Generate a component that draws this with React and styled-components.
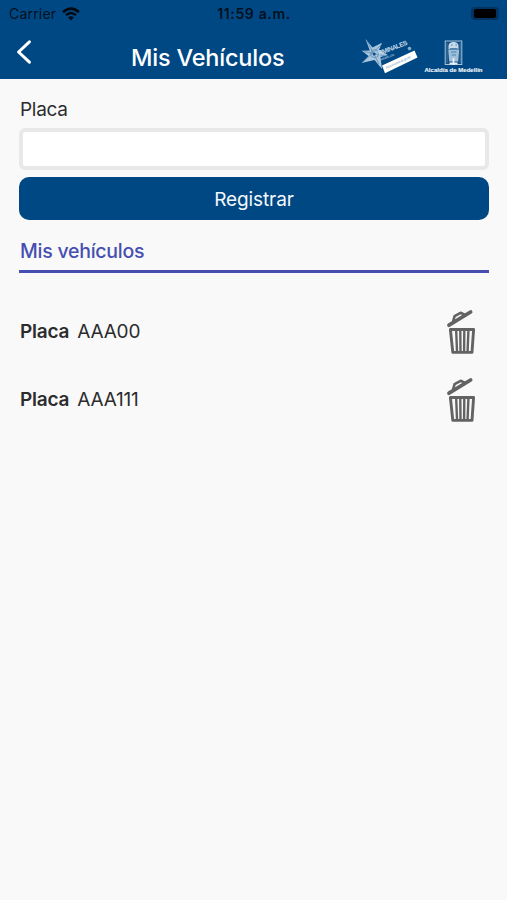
import React, { useState } from 'react';
import styled, { createGlobalStyle } from 'styled-components';

// base styles for the page
const GlobalStyle = createGlobalStyle`
  * {
    box-sizing: border-box;
  }
  body {
    margin: 0;
    background-color: #f9f9f9;
    color: #2c2c2e;
    font-family: Inter, "Liberation Sans", sans-serif;
  }
`;

const Screen = styled.div`
  min-height: 900px;
  background-color: #f9f9f9;
`;

// styles for the header
const Header = styled.header`
  height: 79px;
  background-color: #004884;
`;

const StatusBar = styled.div`
  display: grid;
  grid-template-columns: 1fr auto 1fr;
  align-items: center;
  height: 27px;
  padding: 0 8px 0 9px;
  color: #041020;
  font-size: 14px;
`;

const Carrier = styled.div`
  display: flex;
  align-items: center;
  gap: 6px;
  letter-spacing: 0.2px;
`;

const Clock = styled.div`
  font-weight: 600;
  letter-spacing: 0.65px;
`;

const Battery = styled.div`
  justify-self: end;
  width: 28px;
  height: 13px;
  padding: 2px 3px;
  border-radius: 4px;
  background-color: #023361;
`;

const BatteryLevel = styled.div`
  height: 9px;
  border-radius: 2px;
  background-color: #000;
`;

const NavBar = styled.div`
  display: grid;
  grid-template-columns: 131px 1fr 147px;
  height: 52px;
`;

const BackButton = styled.button`
  display: flex;
  align-items: flex-start;
  padding: 13px 0 0 16px;
  border: none;
  background: none;
`;

const Title = styled.h1`
  margin: 0;
  padding-top: 16px;
  color: #fff;
  font-size: 23.5px;
  font-weight: 500;
  line-height: 30px;
  letter-spacing: -0.2px;
  white-space: nowrap;
`;

const Logos = styled.div`
  display: flex;
  align-items: flex-start;
  gap: 5px;
  padding: 11px 0 0 1px;
`;

// styles for the content
const Content = styled.main`
  padding: 18px 18px 0 19px;
`;

const Label = styled.label`
  display: block;
  padding-left: 1px;
  font-size: 19px;
  line-height: 26px;
  letter-spacing: -0.3px;
`;

const Input = styled.input`
  display: block;
  width: 100%;
  height: 42px;
  margin-top: 5px;
  padding: 0 10px;
  border: 4px solid #e8e8e8;
  border-radius: 6px;
  outline: none;
  background-color: #fff;
  font: inherit;
  font-size: 19px;
`;

const Button = styled.button`
  display: block;
  width: 100%;
  height: 43px;
  margin-top: 7px;
  padding: 2px 0 0;
  border: none;
  border-radius: 10px;
  background-color: #004884;
  color: #f4f8fb;
  font-family: inherit;
  font-size: 19px;
  letter-spacing: -0.1px;
`;

const SectionTitle = styled.h2`
  height: 53px;
  margin: 0;
  padding: 17px 0 0 1px;
  border-bottom: 3px solid #464fb0;
  color: #464fb0;
  font-size: 19.5px;
  font-weight: 500;
  line-height: 28px;
  letter-spacing: -0.25px;
`;

const List = styled.ul`
  margin: 0;
  padding: 25px 0 0;
  list-style: none;
`;

const Row = styled.li`
  display: flex;
  align-items: center;
  justify-content: space-between;
  height: 68px;
  padding: 0 13px 0 1px;
  font-size: 19px;
`;

const Plate = styled.span`
  display: flex;
  gap: 8px;
  padding-bottom: 2px;
  letter-spacing: -0.2px;
`;

const Strong = styled.strong`
  font-weight: 600;
`;

const DeleteButton = styled.button`
  height: 46px;
  padding: 0;
  border: none;
  background: none;
`;

const WifiIcon = () => (
  <svg width="18" height="14" viewBox="0 0 18 14" fill="none" stroke="#02080f">
    <path d="M1 5.2Q9 -2 17 5.2" strokeWidth="2.5" />
    <path d="M4 8.2Q9 3.8 14 8.2" strokeWidth="2.3" />
    <path d="M6.2 10.4Q9 8 11.8 10.4L9 13.4Z" fill="#02080f" stroke="none" />
  </svg>
);

const BackIcon = () => (
  <svg width="16" height="24" viewBox="0 0 16 24" fill="none">
    <path d="M13.4 1.8L2.6 12L13.4 22.2" stroke="#fff" strokeWidth="3" strokeLinecap="round" strokeLinejoin="round" />
  </svg>
);

const TrashIcon = () => (
  <svg width="30" height="46" viewBox="0 0 30 46" fill="none" stroke="#636363" strokeLinecap="round" strokeLinejoin="round">
    <path d="M3 16.2L24.6 3" strokeWidth="3.8" />
    <path d="M7.2 12L8.6 7.2L14.6 3.8L18.6 5.6" strokeWidth="2.6" />
    <path d="M4.4 20.5H27.6L26 43.4H6.8Z" strokeWidth="2.9" />
    <path d="M10.2 22L11 42M14.3 22L14.5 42M18.3 22L18.1 42M22.4 22L21.6 42" strokeWidth="2.4" />
  </svg>
);

const TerminalesLogo = () => (
  <svg width="58" height="37" viewBox="0 0 58 37">
    <path
      d="M4.5 1L11.5 9.5L21 4.8L18 12L27 17L19.5 19L21 31L13.5 22L0.5 25L7.5 18L0.8 12.8L8.8 12.4Z"
      fill="#a9c6dd"
    />
    <g stroke="#4f83ac" strokeWidth="0.7" fill="none">
      <path d="M6 3L18 26M2 24L21 6M3 13.5L25 18" />
      <circle cx="13.7" cy="15.7" r="4" />
    </g>
    <circle cx="13.2" cy="15.9" r="1.5" fill="#0b5089" />
    <g fontFamily="Liberation Sans, sans-serif" fontWeight="700">
      <text transform="translate(18 17.6) rotate(-21)" fontSize="6.6" fill="#c5d9e8" textLength="31">RMINALES</text>
      <text transform="translate(20 22.6) rotate(-21)" fontSize="2.8" fill="#9fbfd9">MEDELLÍN</text>
    </g>
    <circle cx="48.5" cy="10.6" r="1.8" fill="#83abcb" />
    <path d="M21 27.4L53.5 12.4L56.5 19.6L24 35.3Z" fill="#fff" />
    <text
      transform="translate(25.6 30.9) rotate(-24.5)"
      fontFamily="Liberation Sans, sans-serif"
      fontSize="3.6"
      fill="#8da9c2"
      textLength="27"
    >
      Nos mueve la gente
    </text>
  </svg>
);

const AlcaldiaLogo = () => (
  <svg width="62" height="36" viewBox="0 0 62 36">
    <rect x="21.2" y="3" width="16.6" height="23.5" fill="#124f86" stroke="#a6c2da" strokeWidth="1" />
    <path d="M24.5 8C24.5 2.5 34.5 2.5 34.5 8V11H24.5Z" fill="#c4d9e9" />
    <path d="M24.2 11.5H35.2L34.2 23.5H25.2Z" fill="#9fc0da" />
    <path d="M29.5 20V27M25.5 25.5H33.5" stroke="#e7f1f8" strokeWidth="1.8" />
    <path d="M27 7H28.5M31.5 7H33M26 10.5H33.5M27 14H32.5M27.5 17H32M23 5V25M36.2 5V25" stroke="#427aa6" strokeWidth="0.9" />
    <text
      x="0.5"
      y="34"
      fontFamily="Liberation Sans, sans-serif"
      fontWeight="700"
      fontSize="6"
      fill="#eef5fa"
      stroke="#eef5fa"
      strokeWidth="0.15"
      textLength="58"
    >
      Alcaldía de Medellín
    </text>
  </svg>
);

const initialVehicles = ['AAA00', 'AAA111'];

function App() {
  const [vehicles, setVehicles] = useState(initialVehicles);
  const [plate, setPlate] = useState('');

  const onSubmit = event => {
    event.preventDefault();
    if (plate) {
      setVehicles([...vehicles, plate]);
      setPlate('');
    }
  };

  const removeVehicle = (vehicle) => {
    setVehicles(vehicles.filter(v => v !== vehicle));
  };

  return (
    <Screen>
      <GlobalStyle />
      <Header>
        <StatusBar>
          <Carrier>
            Carrier
            <WifiIcon />
          </Carrier>
          <Clock>11:59 a.m.</Clock>
          <Battery>
            <BatteryLevel />
          </Battery>
        </StatusBar>
        <NavBar>
          <BackButton type="button">
            <BackIcon />
          </BackButton>
          <Title>Mis Vehículos</Title>
          <Logos>
            <TerminalesLogo />
            <AlcaldiaLogo />
          </Logos>
        </NavBar>
      </Header>
      <Content>
        <form onSubmit={onSubmit}>
          <Label htmlFor="placa">Placa</Label>
          <Input
            id="placa"
            name="placa"
            type="text"
            value={plate}
            onChange={e => setPlate(e.target.value)}
          />
          <Button type="submit">Registrar</Button>
        </form>
        <SectionTitle>Mis vehículos</SectionTitle>
        <List>
          {vehicles.map(vehicle => (
            <Row key={vehicle}>
              <Plate>
                <Strong>Placa</Strong>
                {vehicle}
              </Plate>
              <DeleteButton type="button" onClick={() => removeVehicle(vehicle)}>
                <TrashIcon />
              </DeleteButton>
            </Row>
          ))}
        </List>
      </Content>
    </Screen>
  );
}

export default App;
